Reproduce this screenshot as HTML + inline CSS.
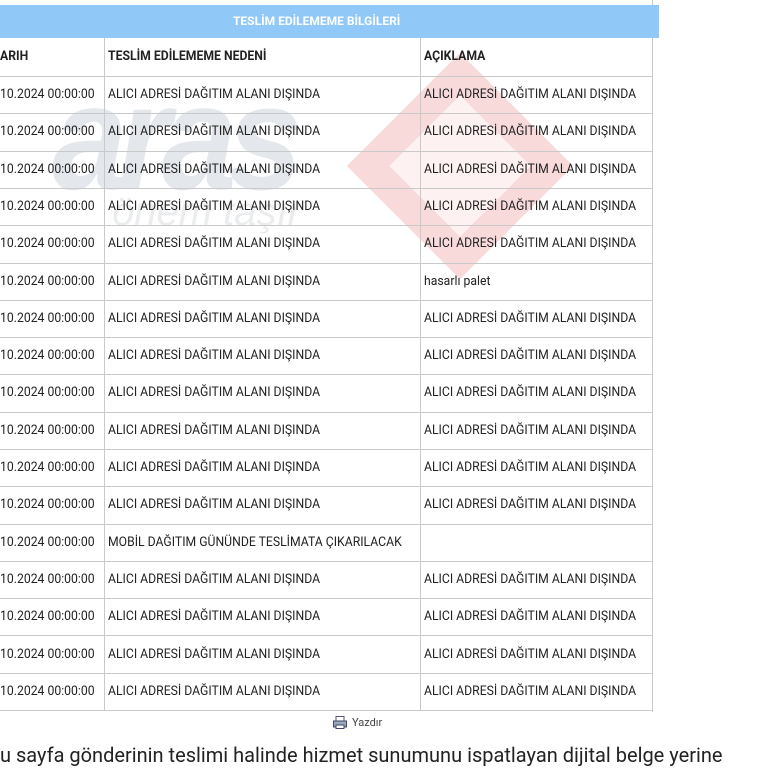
<!DOCTYPE html>
<html><head><meta charset="utf-8"><style>
*{margin:0;padding:0;box-sizing:border-box}
body{width:768px;height:768px;background:#fff;position:relative;overflow:hidden;font-family:"Roboto","Liberation Sans",sans-serif;color:#222}
.abs{position:absolute}
.t{position:absolute;font-size:13px;white-space:nowrap;transform:scaleX(.94);transform-origin:left center;line-height:16px}
.hl{position:absolute;left:0;width:652px;height:1px;background:#c9c9c9}
.vl{position:absolute;width:1px;background:#c9c9c9}
</style></head><body>
<!-- watermark -->
<div class="abs" style="left:52px;top:62px;font:italic bold 150px 'Liberation Sans',sans-serif;color:#e4e7eb;letter-spacing:-10px;line-height:150px;transform:scaleX(.9);transform-origin:left">aras</div>
<div class="abs" style="left:112px;top:190px;font:italic 40px 'Liberation Sans',sans-serif;color:#eaecee;line-height:44px">önem taşır</div>
<div class="abs" style="left:380px;top:86px;width:160px;height:160px;transform:rotate(45deg);border:30px solid #f8dada;background:#fdf1f1"></div>
<!-- outer -->
<div class="vl" style="left:652px;top:0;height:712px"></div>
<div class="abs" style="left:0;top:5px;width:659px;height:33px;background:#90c8f8"></div>
<div class="t" style="left:233px;top:13px;color:#fff;font-weight:bold;font-size:12px;transform:none">TESLİM EDİLEMEME BİLGİLERİ</div>
<div class="vl" style="left:104px;top:38px;height:672px"></div>
<div class="vl" style="left:420px;top:38px;height:672px"></div>
<div class="t" style="left:0;top:49px;font-weight:bold">ARIH</div>
<div class="t" style="left:108px;top:49px;font-weight:bold">TESLİM EDİLEMEME NEDENİ</div>
<div class="t" style="left:424px;top:49px;font-weight:bold">AÇIKLAMA</div>
<div id="rows"></div>
<script>
var r=document.getElementById('rows'),h='';
var A='ALICI ADRESİ DAĞITIM ALANI DIŞINDA';
h+='<div class="hl" style="top:76px"></div>';
for(var i=0;i<17;i++){
 var y=76+i*37.3;
 var b=A,c=A;
 if(i==5)c='hasarlı palet';
 if(i==12){b='MOBİL DAĞITIM GÜNÜNDE TESLİMATA ÇIKARILACAK';c='';}
 h+='<div class="t" style="left:0;top:'+(y+11)+'px">10.2024 00:00:00</div>';
 h+='<div class="t" style="left:108px;top:'+(y+11)+'px">'+b+'</div>';
 h+='<div class="t" style="left:424px;top:'+(y+11)+'px">'+c+'</div>';
 h+='<div class="hl" style="top:'+Math.round(y+37.3)+'px"></div>';
}
r.innerHTML=h;
</script>
<svg class="abs" style="left:333px;top:716px" width="14" height="13" viewBox="0 0 14 13"><rect x="3" y="0.5" width="8" height="5" fill="#fff" stroke="#557"/><rect x="0.5" y="5" width="13" height="6" fill="#9ab" stroke="#446"/><rect x="3" y="9" width="8" height="3.5" fill="#fff" stroke="#446"/></svg>
<div class="t" style="left:352px;top:715px;font-size:11px;color:#444;transform:none">Yazdır</div>
<div class="abs" style="left:0;top:743px;font-size:20px;white-space:nowrap;color:#222;line-height:24px">u sayfa gönderinin teslimi halinde hizmet sunumunu ispatlayan dijital belge yerine</div>
</body></html>
